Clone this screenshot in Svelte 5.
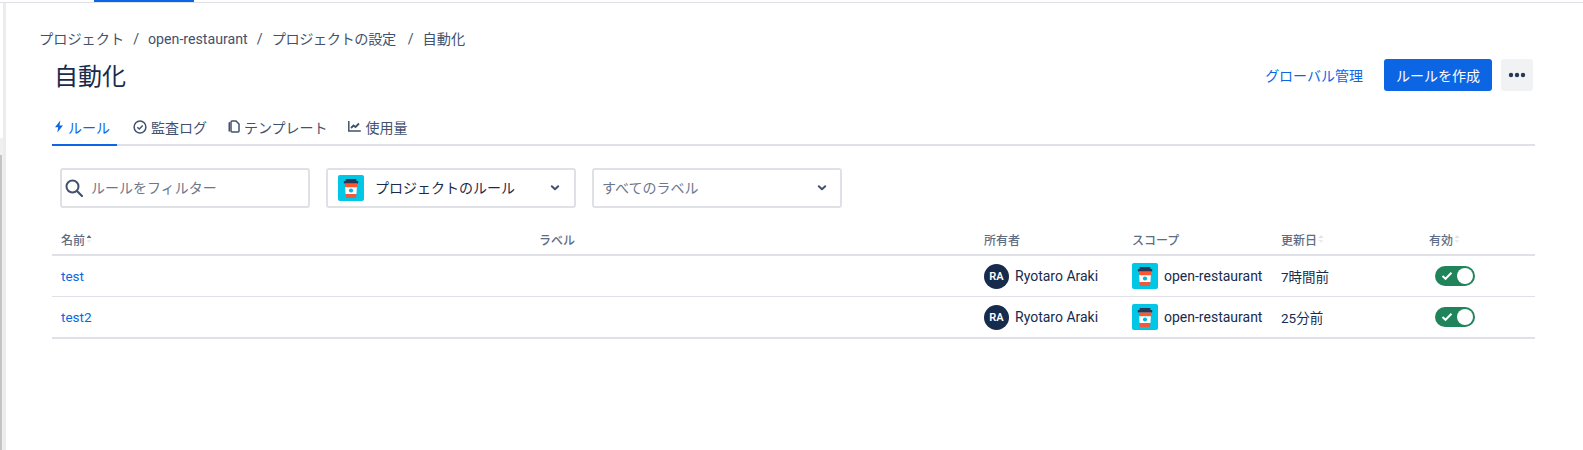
<script>
  const tabs = [
    { key: 'rules', label: 'ルール', active: true },
    { key: 'audit', label: '監査ログ' },
    { key: 'templates', label: 'テンプレート' },
    { key: 'usage', label: '使用量' }
  ];
  const crumbs = ['プロジェクト', 'open-restaurant', 'プロジェクトの設定', '自動化'];
  const rules = [
    { name: 'test', updated: '7時間前' },
    { name: 'test2', updated: '25分前' }
  ];
</script>

{#snippet coffee(size)}
  <svg class="project-icon" width={size} height={size} viewBox="0 0 26 26">
    <rect width="26" height="26" rx="2" fill="#00c7e6" />
    <rect x="7.500" y="4" width="11" height="2.500" rx="1" fill="#253858" />
    <rect x="5.800" y="6" width="14.400" height="2.500" rx="0.500" fill="#253858" />
    <path d="M6.800 8.500h12.400l-0.300 3.800H7.100z" fill="#ff5630" />
    <path d="M7.100 12.300h11.800l-0.500 6.700H7.600z" fill="#fff" />
    <path d="M7.600 19h10.800l-0.400 4H8z" fill="#ef5a3c" />
    <circle cx="13" cy="15.500" r="2.100" fill="#00b8d9" />
  </svg>
{/snippet}

{#snippet chevron()}
  <svg class="chevron" width="10" height="8" viewBox="0 0 10 8">
    <path d="M1.800 2.200l3.200 3 3.200-3" fill="none" stroke="#42526e" stroke-width="2" stroke-linecap="round" stroke-linejoin="round" />
  </svg>
{/snippet}

{#snippet sorter(up)}
  <svg class="sorter" width="6" height="10" viewBox="0 0 6 10">
    <path d="M3 1l2.500 3h-5z" fill={up ? '#5e6c84' : '#dfe1e6'} />
    <path d="M3 9L.5 6h5z" fill="#ebecf0" />
  </svg>
{/snippet}

<div class="page">
  <div class="topbar"><span class="topbar-active"></span></div>
  <div class="body">
    <div class="gutter">
      <div class="gutter-light"></div>
      <div class="gutter-dark"></div>
    </div>
    <div class="rail"></div>
    <main class="content">
      <nav class="crumbs">
        {#each crumbs as crumb, i}
          {#if i > 0}<span class="sep">/</span>{/if}
          <span>{crumb}</span>
        {/each}
      </nav>

      <div class="head">
        <h1>自動化</h1>
        <div class="actions">
          <a class="global-link" href="#global">グローバル管理</a>
          <button class="primary">ルールを作成</button>
          <button class="more" aria-label="more">
            <svg width="18" height="6" viewBox="0 0 18 6">
              <circle cx="3" cy="3" r="2.200" fill="#253858" />
              <circle cx="9" cy="3" r="2.200" fill="#253858" />
              <circle cx="15" cy="3" r="2.200" fill="#253858" />
            </svg>
          </button>
        </div>
      </div>

      <div class="tabs">
        {#each tabs as tab}
          <div class="tab" class:active={tab.active}>
            {#if tab.key === 'rules'}
              <svg width="10" height="13" viewBox="0 0 10 13"><path d="M6.300 0.500L1 7.300h3.200L3.300 12.500 9 5.500H5.500z" fill="#0c66e4" /></svg>
            {:else if tab.key === 'audit'}
              <svg width="14" height="14" viewBox="0 0 14 14"><circle cx="7" cy="7" r="5.900" fill="none" stroke="#42526e" stroke-width="1.500" /><path d="M4.300 7.200l2 1.900 3.400-3.500" fill="none" stroke="#42526e" stroke-width="1.400" /></svg>
            {:else if tab.key === 'templates'}
              <svg width="13" height="13" viewBox="-0.500 0 13 13"><path d="M2.500 2v9.500H1V3q0-1 1.500-1z" fill="#42526e" /><path d="M4.500 1h4l3 3v7q0 1-1 1h-6q-1 0-1-1V2q0-1 1-1z" fill="none" stroke="#42526e" stroke-width="1.500" /></svg>
            {:else}
              <svg width="14" height="11" viewBox="0 0 14 11"><path d="M.8 0v10h12" fill="none" stroke="#42526e" stroke-width="1.500" /><path d="M3 7l2.500-2.500 2 1.500L11 2.500" fill="none" stroke="#42526e" stroke-width="1.800" /></svg>
            {/if}
            <span>{tab.label}</span>
          </div>
        {/each}
      </div>

      <div class="filters">
        <div class="field search">
          <svg width="18" height="18" viewBox="0 0 18 18"><circle cx="7.500" cy="7.500" r="6" fill="none" stroke="#42526e" stroke-width="2" /><path d="M12 12l5 5" stroke="#42526e" stroke-width="2.200" stroke-linecap="round" /></svg>
          <span class="placeholder">ルールをフィルター</span>
        </div>
        <div class="field select project">
          {@render coffee(26)}
          <span class="select-value">プロジェクトのルール</span>
          {@render chevron()}
        </div>
        <div class="field select labels">
          <span class="placeholder grow">すべてのラベル</span>
          {@render chevron()}
        </div>
      </div>

      <div class="table">
        <div class="row header">
          <div>名前{@render sorter(true)}</div>
          <div>ラベル</div>
          <div>所有者</div>
          <div>スコープ</div>
          <div>更新日{@render sorter(false)}</div>
          <div>有効{@render sorter(false)}</div>
        </div>
        {#each rules as rule}
          <div class="row item">
            <div><a href="#rule">{rule.name}</a></div>
            <div></div>
            <div class="cell-flex"><span class="avatar">RA</span>Ryotaro Araki</div>
            <div class="cell-flex">{@render coffee(26)}open-restaurant</div>
            <div>{rule.updated}</div>
            <div>
              <span class="toggle">
                <svg width="12" height="10" viewBox="0 0 12 10"><path d="M1.500 5l3 2.800L10.500 1.800" fill="none" stroke="#fff" stroke-width="2" /></svg>
                <span class="knob"></span>
              </span>
            </div>
          </div>
        {/each}
      </div>
    </main>
  </div>
</div>

<style>
  :global(body) {
    background: #fff;
    font-family: Roboto, "Noto Sans CJK JP", sans-serif;
    font-size: 14px;
    color: #172b4d;
  }

  .page {
    height: 450px;
    overflow: hidden;
  }

  .topbar {
    height: 3px;
    border-bottom: 1px solid #dfe1e6;
    box-sizing: border-box;
    padding-left: 94px;
  }

  .topbar-active {
    display: block;
    width: 100px;
    height: 2px;
    background: #0c66e4;
  }

  .body {
    display: flex;
    height: 447px;
  }

  .gutter {
    width: 3px;
    padding-top: 135px;
    box-sizing: border-box;
    flex-shrink: 0;
    display: flex;
    flex-direction: column;
  }

  .gutter-light {
    height: 17px;
    background: #f0f0f0;
  }

  .gutter-dark {
    flex: 1;
    background: linear-gradient(to right, #c4c4c4 2px, #f0f0f0 2px);
  }

  .rail {
    width: 3px;
    background: #ebecf0;
    flex-shrink: 0;
  }

  .content {
    flex: 1;
    padding: 26px 48px 0 33px;
    min-width: 0;
  }

  .crumbs {
    display: flex;
    gap: 8px;
    height: 20px;
    line-height: 20px;
    color: #42526e;
    font-size: 14.200px;
  }

  .crumbs span:nth-child(5) {
    letter-spacing: -0.400px;
    margin-right: 3px;
  }

  .sep {
    margin: 0 1px;
  }

  .head {
    display: flex;
    align-items: center;
    justify-content: space-between;
    margin-top: 6px;
    padding-left: 15px;
    height: 40px;
  }

  h1 {
    margin: 0 0 2px;
    font-size: 24px;
    font-weight: 400;
    color: #172b4d;
  }

  .actions {
    display: flex;
    align-items: center;
    margin-right: 2px;
  }

  .global-link {
    color: #0c66e4;
    text-decoration: none;
    margin-right: 21px;
  }

  button {
    border: 0;
    border-radius: 3px;
    font: inherit;
    height: 32px;
    padding: 0;
  }

  .primary {
    width: 108px;
    background: #0c66e4;
    color: #fff;
  }

  .more {
    width: 32px;
    margin-left: 9px;
    background: #f1f2f4;
    display: flex;
    align-items: center;
    justify-content: center;
  }

  .tabs {
    display: flex;
    height: 33px;
    margin-top: 18px;
    margin-left: 13px;
    border-bottom: 2px solid #dfe1e6;
    box-sizing: border-box;
    font-size: 14px;
  }

  .tab {
    display: flex;
    align-items: center;
    gap: 4px;
    height: 33px;
    padding: 0 4px 6px;
    margin-right: 12px;
    box-sizing: border-box;
    color: #42526e;
  }

  .tab.active {
    padding: 0 7px 4px 2px;
    margin-right: 12px;
    color: #0c66e4;
    border-bottom: 2px solid #0c66e4;
  }

  .filters {
    display: flex;
    gap: 16px;
    margin-top: 22px;
    margin-left: 21px;
  }

  .field {
    display: flex;
    align-items: center;
    box-sizing: border-box;
    width: 250px;
    height: 40px;
    border: 2px solid #dfe1e6;
    border-radius: 3px;
  }

  .search {
    padding-left: 3px;
    gap: 8px;
  }

  .project {
    padding-right: 14px;
    padding-left: 10px;
  }

  .select-value {
    flex: 1;
    margin: 0 0 3px 11px;
    color: #172b4d;
  }

  .labels {
    padding-right: 13px;
    padding-left: 8px;
  }

  .placeholder {
    margin-bottom: 3px;
    color: #6b778c;
  }

  .grow {
    flex: 1;
  }

  .table {
    margin-top: 20px;
    margin-left: 13px;
  }

  .row {
    display: grid;
    grid-template-columns: 478px 445px 148px 149px 148px 106px;
    padding-left: 9px;
    box-sizing: border-box;
    align-items: center;
  }

  .header {
    height: 28px;
    padding-bottom: 3px;
    border-bottom: 2px solid #dfe1e6;
    color: #5e6c84;
    font-size: 12px;
    font-weight: 500;
  }

  .item {
    height: 41px;
    border-bottom: 1px solid #dfe1e6;
    font-size: 13.500px;
  }

  .item:last-child {
    height: 42px;
    border-bottom-width: 2px;
  }

  .item a {
    color: #0c66e4;
    text-decoration: none;
  }

  .sorter {
    margin-left: 1px;
    vertical-align: 1px;
  }

  .cell-flex {
    display: flex;
    align-items: center;
    gap: 6px;
    white-space: nowrap;
    font-size: 14px;
  }

  .avatar {
    display: inline-flex;
    align-items: center;
    justify-content: center;
    width: 25px;
    height: 25px;
    border-radius: 50%;
    background: #172b4d;
    color: #fff;
    font-size: 11px;
    font-weight: 600;
  }

  .project-icon {
    flex-shrink: 0;
  }

  .toggle {
    display: flex;
    align-items: center;
    justify-content: space-between;
    box-sizing: border-box;
    width: 40px;
    height: 20px;
    margin-left: 6px;
    padding: 0 2px 0 6px;
    border-radius: 10px;
    background: #1f845a;
  }

  .knob {
    width: 16px;
    height: 16px;
    border-radius: 50%;
    background: #fff;
  }
</style>
